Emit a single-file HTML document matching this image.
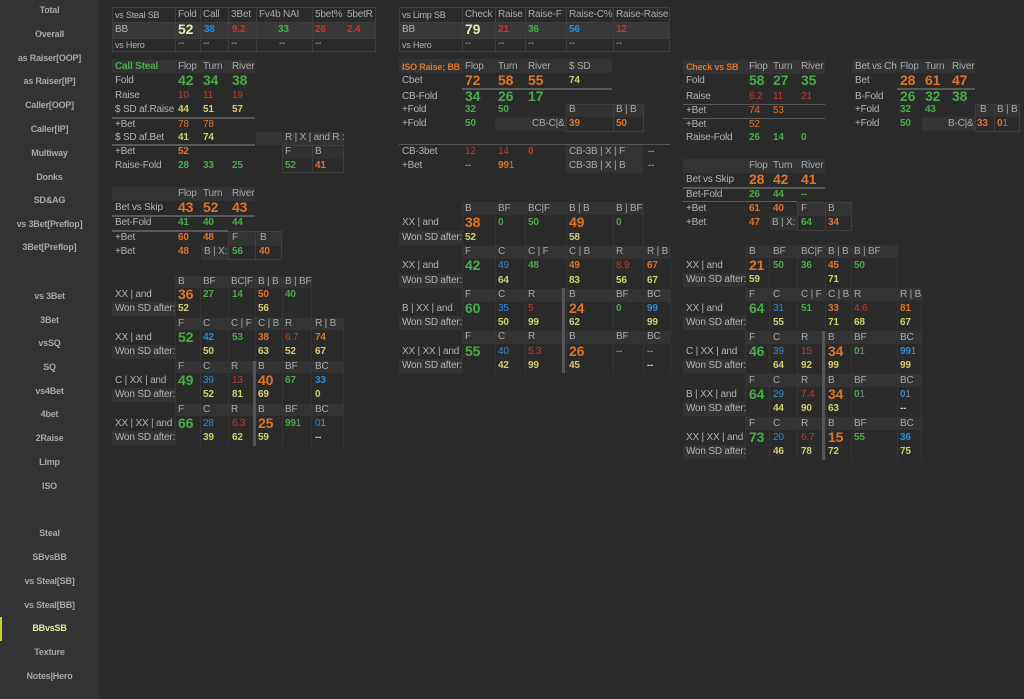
<!DOCTYPE html>
<html><head><meta charset="utf-8"><style>
html,body{margin:0;padding:0}
body{width:1024px;height:699px;background:#2a2a2a;position:relative;overflow:hidden;font-family:"Liberation Sans",sans-serif}
#sb{position:absolute;left:0;top:0;width:99px;height:699px;background:#333}
.s{position:absolute;left:0;width:99px;text-align:center;font-size:9px;letter-spacing:-0.2px;font-weight:bold;color:#a8a8a8;line-height:14px}
i{position:absolute;font-style:normal;white-space:nowrap;line-height:14px;font-size:10px;letter-spacing:-0.2px;color:#aaa}
.L{color:#b4b4b4}
.G,.O,.R,.B,.Y,.P{font-weight:bold}
.G{color:#4aac48}.O{color:#e0742a}.R{color:#cc3434}.B{color:#2a8ddb}.Y{color:#d0d070}.P{color:#e8e8b0}.W{color:#ccc;font-weight:bold}
.k{font-size:14px}
.n{font-weight:normal}
.bx{position:absolute;background:#333}
.bd{position:absolute;border:1px solid #3e3e3e;box-sizing:border-box}
.ln{position:absolute;height:2px;background:#5a5a5a}
.vb{position:absolute;width:3px;background:#555}
.vl{position:absolute;width:1px;background:#353535}
</style></head><body>
<div id="sb"></div>
<div class="s" style="top:3px">Total</div>
<div class="s" style="top:27px">Overall</div>
<div class="s" style="top:51px">as Raiser[OOP]</div>
<div class="s" style="top:74px">as Raiser[IP]</div>
<div class="s" style="top:98px">Caller[OOP]</div>
<div class="s" style="top:122px">Caller[IP]</div>
<div class="s" style="top:146px">Multiway</div>
<div class="s" style="top:170px">Donks</div>
<div class="s" style="top:193px">SD&amp;AG</div>
<div class="s" style="top:217px">vs 3Bet[Preflop]</div>
<div class="s" style="top:240px">3Bet[Preflop]</div>
<div class="s" style="top:289px">vs 3Bet</div>
<div class="s" style="top:313px">3Bet</div>
<div class="s" style="top:336px">vsSQ</div>
<div class="s" style="top:360px">SQ</div>
<div class="s" style="top:384px">vs4Bet</div>
<div class="s" style="top:407px">4bet</div>
<div class="s" style="top:431px">2Raise</div>
<div class="s" style="top:455px">Limp</div>
<div class="s" style="top:479px">ISO</div>
<div class="s" style="top:526px">Steal</div>
<div class="s" style="top:550px">SBvsBB</div>
<div class="s" style="top:574px">vs Steal[SB]</div>
<div class="s" style="top:598px">vs Steal[BB]</div>
<div style="position:absolute;left:0;top:617px;width:2px;height:24px;background:#c8d040"></div>
<div class="s" style="top:621px;color:#e0f0a0">BBvsSB</div>
<div class="s" style="top:645px">Texture</div>
<div class="s" style="top:669px">Notes|Hero</div>

<!-- vs Steal SB table -->
<div class="bx" style="left:112px;top:22px;width:263px;height:16px;background:#383838"></div>
<div class="bd" style="left:112px;top:7px;width:64px;height:45px"></div>
<div class="bd" style="left:175px;top:7px;width:26px;height:45px"></div>
<div class="bd" style="left:200px;top:7px;width:29px;height:45px"></div>
<div class="bd" style="left:228px;top:7px;width:29px;height:45px"></div>
<div class="bd" style="left:256px;top:7px;width:57px;height:45px"></div>
<div class="bd" style="left:312px;top:7px;width:64px;height:45px"></div>
<div class="bd" style="left:112px;top:22px;width:264px;height:17px"></div>
<i class="L" style="left:115px;top:8px;font-size:9px">vs Steal SB</i>
<i style="left:178px;top:8px">Fold</i><i style="left:203px;top:8px">Call</i><i style="left:231px;top:8px">3Bet</i><i style="left:259px;top:8px">Fv4b NAI</i><i style="left:315px;top:8px">5bet%</i><i style="left:347px;top:8px">5betR</i>
<i class="L" style="left:115px;top:23px">BB</i>
<i class="P k" style="left:178px;top:22px">52</i><i class="B" style="left:204px;top:23px">38</i><i class="R" style="left:232px;top:23px">9.2</i><i class="G" style="left:278px;top:23px">33</i><i class="R" style="left:315px;top:23px">26</i><i class="R" style="left:347px;top:23px">2.4</i>
<i class="L" style="left:115px;top:38px;font-size:9px">vs Hero</i>
<i style="left:178px;top:37px">--</i><i style="left:203px;top:37px">--</i><i style="left:231px;top:37px">--</i><i style="left:279px;top:37px">--</i><i style="left:315px;top:37px">--</i>

<!-- Call Steal -->
<div class="bx" style="left:112px;top:60px;width:143px;height:13px"></div>
<i class="G" style="left:115px;top:60px">Call Steal</i>
<i style="left:178px;top:60px">Flop</i><i style="left:203px;top:60px">Turn</i><i style="left:232px;top:60px">River</i>
<i class="L" style="left:115px;top:74px">Fold</i><i class="G k" style="left:178px;top:73px">42</i><i class="G k" style="left:203px;top:73px">34</i><i class="G k" style="left:232px;top:73px">38</i>
<i class="L" style="left:115px;top:89px">Raise</i><i class="R n" style="left:178px;top:89px">10</i><i class="R n" style="left:203px;top:89px">11</i><i class="R n" style="left:232px;top:89px">19</i>
<i class="L" style="left:115px;top:103px">$ SD af.Raise</i><i class="Y" style="left:178px;top:103px">44</i><i class="Y" style="left:203px;top:103px">51</i><i class="Y" style="left:232px;top:103px">57</i>
<div class="ln" style="left:112px;top:117px;width:143px"></div>
<i class="L" style="left:115px;top:118px">+Bet</i><i class="O n" style="left:178px;top:118px">78</i><i class="O n" style="left:203px;top:118px">78</i>
<i class="L" style="left:115px;top:131px">$ SD af.Bet</i><i class="Y" style="left:178px;top:131px">41</i><i class="Y" style="left:203px;top:131px">74</i>
<div class="ln" style="left:112px;top:144px;width:143px"></div>
<div class="bx" style="left:256px;top:132px;width:88px;height:13px"></div>
<i style="left:285px;top:131px">R | X | and R :</i>
<div class="bx" style="left:282px;top:145px;width:61px;height:14px;background:#303030"></div>
<div class="bd" style="left:282px;top:145px;width:31px;height:28px"></div><div class="bd" style="left:312px;top:145px;width:32px;height:28px"></div>
<i style="left:285px;top:145px">F</i><i style="left:315px;top:145px">B</i>
<i class="G" style="left:285px;top:159px">52</i><i class="O" style="left:315px;top:159px">41</i>
<i class="L" style="left:115px;top:145px">+Bet</i><i class="O" style="left:178px;top:145px">52</i>
<i class="L" style="left:115px;top:159px">Raise-Fold</i><i class="G" style="left:178px;top:159px">28</i><i class="G" style="left:203px;top:159px">33</i><i class="G" style="left:232px;top:159px">25</i>

<!-- Bet vs Skip left -->
<div class="bx" style="left:112px;top:187px;width:143px;height:14px"></div>
<i style="left:178px;top:187px">Flop</i><i style="left:203px;top:187px">Turn</i><i style="left:232px;top:187px">River</i>
<i class="L" style="left:115px;top:201px">Bet vs Skip</i><i class="O k" style="left:178px;top:200px">43</i><i class="O k" style="left:203px;top:200px">52</i><i class="O k" style="left:232px;top:200px">43</i>
<div class="ln" style="left:112px;top:215px;width:143px"></div>
<i class="L" style="left:115px;top:216px">Bet-Fold</i><i class="G" style="left:178px;top:216px">41</i><i class="G" style="left:203px;top:216px">40</i><i class="G" style="left:232px;top:216px">44</i>
<div class="ln" style="left:112px;top:230px;width:116px"></div>
<div class="bx" style="left:228px;top:231px;width:54px;height:15px"></div>
<i class="L" style="left:115px;top:231px">+Bet</i><i class="O" style="left:178px;top:231px">60</i><i class="O" style="left:203px;top:231px">48</i><i style="left:232px;top:231px">F</i><i style="left:260px;top:231px">B</i>
<div class="bx" style="left:201px;top:246px;width:27px;height:14px"></div>
<div class="bd" style="left:228px;top:231px;width:28px;height:29px"></div><div class="bd" style="left:255px;top:231px;width:27px;height:29px"></div>
<i class="L" style="left:115px;top:245px">+Bet</i><i class="O" style="left:178px;top:245px">48</i><i style="left:204px;top:245px">B | X:</i><i class="G" style="left:232px;top:245px">56</i><i class="O" style="left:259px;top:245px">40</i>

<!-- Left cross tables -->
<div class="bx" style="left:175px;top:276px;width:137px;height:12px"></div>
<div class="bx" style="left:175px;top:318px;width:169px;height:12px"></div>
<div class="bx" style="left:175px;top:361px;width:169px;height:12px"></div>
<div class="bx" style="left:175px;top:404px;width:169px;height:12px"></div>
<div class="bx" style="left:112px;top:302px;width:63px;height:14px"></div>
<div class="bx" style="left:112px;top:345px;width:63px;height:14px"></div>
<div class="bx" style="left:112px;top:388px;width:63px;height:14px"></div>
<div class="bx" style="left:112px;top:431px;width:63px;height:14px"></div>
<div class="vl" style="left:175px;top:276px;height:170px"></div><div class="vl" style="left:200px;top:276px;height:170px"></div><div class="vl" style="left:228px;top:276px;height:170px"></div><div class="vl" style="left:255px;top:276px;height:170px"></div><div class="vl" style="left:282px;top:276px;height:170px"></div><div class="vl" style="left:311px;top:276px;height:170px"></div><div class="vl" style="left:343px;top:318px;height:128px"></div>
<div class="vb" style="left:253px;top:361px;height:85px"></div>
<i style="left:178px;top:275px">B</i><i style="left:203px;top:275px">BF</i><i style="left:231px;top:275px">BC|F</i><i style="left:258px;top:275px">B | B</i><i style="left:285px;top:275px">B | BF</i>
<i class="L" style="left:115px;top:288px">XX | and</i><i class="O k" style="left:178px;top:287px">36</i><i class="G" style="left:203px;top:288px">27</i><i class="G" style="left:232px;top:288px">14</i><i class="O" style="left:258px;top:288px">50</i><i class="G" style="left:285px;top:288px">40</i>
<i class="L" style="left:115px;top:302px">Won SD after:</i><i class="Y" style="left:178px;top:302px">52</i><i class="Y" style="left:258px;top:302px">56</i>
<i style="left:178px;top:317px">F</i><i style="left:203px;top:317px">C</i><i style="left:231px;top:317px">C | F</i><i style="left:258px;top:317px">C | B</i><i style="left:285px;top:317px">R</i><i style="left:315px;top:317px">R | B</i>
<i class="L" style="left:115px;top:331px">XX | and</i><i class="G k" style="left:178px;top:330px">52</i><i class="B" style="left:203px;top:331px">42</i><i class="G" style="left:232px;top:331px">53</i><i class="O" style="left:258px;top:331px">38</i><i class="R n" style="left:285px;top:331px">6.7</i><i class="O" style="left:315px;top:331px">74</i>
<i class="L" style="left:115px;top:345px">Won SD after:</i><i class="Y" style="left:203px;top:345px">50</i><i class="Y" style="left:258px;top:345px">63</i><i class="Y" style="left:285px;top:345px">52</i><i class="Y" style="left:315px;top:345px">67</i>
<i style="left:178px;top:360px">F</i><i style="left:203px;top:360px">C</i><i style="left:231px;top:360px">R</i><i style="left:258px;top:360px">B</i><i style="left:285px;top:360px">BF</i><i style="left:315px;top:360px">BC</i>
<i class="L" style="left:115px;top:374px">C | XX | and</i><i class="G k" style="left:178px;top:373px">49</i><i class="B n" style="left:203px;top:374px">39</i><i class="R n" style="left:232px;top:374px">13</i><i class="O k" style="left:258px;top:373px">40</i><i class="G" style="left:285px;top:374px">67</i><i class="B" style="left:315px;top:374px">33</i>
<i class="L" style="left:115px;top:388px">Won SD after:</i><i class="Y" style="left:203px;top:388px">52</i><i class="Y" style="left:232px;top:388px">81</i><i class="Y" style="left:258px;top:388px">69</i><i class="Y" style="left:315px;top:388px">0</i>
<i style="left:178px;top:403px">F</i><i style="left:203px;top:403px">C</i><i style="left:231px;top:403px">R</i><i style="left:258px;top:403px">B</i><i style="left:285px;top:403px">BF</i><i style="left:315px;top:403px">BC</i>
<i class="L" style="left:115px;top:417px">XX | XX | and</i><i class="G k" style="left:178px;top:416px">66</i><i class="B n" style="left:203px;top:417px">28</i><i class="R n" style="left:232px;top:417px">6.3</i><i class="O k" style="left:258px;top:416px">25</i><i class="G" style="left:285px;top:417px">99<span style="color:#888;font-weight:normal">1</span></i><i class="B n" style="left:315px;top:417px">0<span style="color:#888">1</span></i>
<i class="L" style="left:115px;top:431px">Won SD after:</i><i class="Y" style="left:203px;top:431px">39</i><i class="Y" style="left:232px;top:431px">62</i><i class="Y" style="left:258px;top:431px">59</i><i class="Y" style="left:315px;top:431px">--</i>

<!-- vs Limp SB -->
<div class="bx" style="left:399px;top:22px;width:271px;height:16px;background:#383838"></div>
<div class="bd" style="left:399px;top:7px;width:64px;height:45px"></div>
<div class="bd" style="left:462px;top:7px;width:34px;height:45px"></div>
<div class="bd" style="left:495px;top:7px;width:31px;height:45px"></div>
<div class="bd" style="left:525px;top:7px;width:42px;height:45px"></div>
<div class="bd" style="left:566px;top:7px;width:48px;height:45px"></div>
<div class="bd" style="left:613px;top:7px;width:57px;height:45px"></div>
<div class="bd" style="left:399px;top:22px;width:271px;height:17px"></div>
<i class="L" style="left:402px;top:8px;font-size:9px">vs Limp SB</i>
<i style="left:465px;top:8px">Check</i><i style="left:498px;top:8px">Raise</i><i style="left:528px;top:8px">Raise-F</i><i style="left:569px;top:8px">Raise-C%</i><i style="left:616px;top:8px">Raise-Raise</i>
<i class="L" style="left:402px;top:23px">BB</i>
<i class="P k" style="left:465px;top:22px">79</i><i class="R" style="left:498px;top:23px">21</i><i class="G" style="left:528px;top:23px">36</i><i class="B" style="left:569px;top:23px">56</i><i class="R" style="left:616px;top:23px">12</i>
<i class="L" style="left:402px;top:38px;font-size:9px">vs Hero</i>
<i style="left:465px;top:37px">--</i><i style="left:498px;top:37px">--</i><i style="left:528px;top:37px">--</i><i style="left:569px;top:37px">--</i><i style="left:616px;top:37px">--</i>

<!-- ISO Raise -->
<div class="bx" style="left:399px;top:59px;width:213px;height:14px"></div>
<i class="O" style="left:402px;top:60px;font-size:9px">ISO Raise; BB</i>
<i style="left:465px;top:60px">Flop</i><i style="left:498px;top:60px">Turn</i><i style="left:528px;top:60px">River</i><i style="left:569px;top:60px">$ SD</i>
<i class="L" style="left:402px;top:74px">Cbet</i><i class="O k" style="left:465px;top:73px">72</i><i class="O k" style="left:498px;top:73px">58</i><i class="O k" style="left:528px;top:73px">55</i><i class="Y" style="left:569px;top:74px">74</i>
<div class="ln" style="left:462px;top:88px;width:150px"></div>
<i class="L" style="left:402px;top:90px">CB-Fold</i><i class="G k" style="left:465px;top:89px">34</i><i class="G k" style="left:498px;top:89px">26</i><i class="G k" style="left:528px;top:89px">17</i>
<div class="bx" style="left:566px;top:104px;width:77px;height:13px"></div>
<div class="bx" style="left:495px;top:117px;width:71px;height:14px"></div>
<div class="bd" style="left:566px;top:104px;width:48px;height:28px"></div><div class="bd" style="left:613px;top:104px;width:31px;height:28px"></div>
<i class="L" style="left:402px;top:103px">+Fold</i><i class="G" style="left:465px;top:103px">32</i><i class="G" style="left:498px;top:103px">50</i><i style="left:569px;top:103px">B</i><i style="left:616px;top:103px">B | B</i>
<i class="L" style="left:402px;top:117px">+Fold</i><i class="G" style="left:465px;top:117px">50</i><i style="left:532px;top:117px">CB-C|&amp;</i><i class="O" style="left:569px;top:117px">39</i><i class="O" style="left:616px;top:117px">50</i>
<div style="position:absolute;left:399px;top:144px;width:271px;height:1px;background:#555"></div>
<div class="bx" style="left:566px;top:145px;width:77px;height:28px"></div>
<i class="L" style="left:402px;top:145px">CB-3bet</i><i class="R n" style="left:465px;top:145px">12</i><i class="R n" style="left:498px;top:145px">14</i><i class="R" style="left:528px;top:145px">0</i><i style="left:569px;top:145px">CB-3B | X | F</i><i class="G" style="left:648px;top:145px">--</i>
<i class="L" style="left:402px;top:159px">+Bet</i><i class="O" style="left:465px;top:159px">--</i><i class="O" style="left:498px;top:159px">99<span style="color:#888;font-weight:normal">1</span></i><i style="left:569px;top:159px">CB-3B | X | B</i><i class="O" style="left:648px;top:159px">--</i>

<!-- middle cross tables -->
<div class="bx" style="left:462px;top:202px;width:181px;height:13px"></div>
<div class="bx" style="left:462px;top:246px;width:208px;height:13px"></div>
<div class="bx" style="left:462px;top:289px;width:208px;height:13px"></div>
<div class="bx" style="left:462px;top:331px;width:208px;height:13px"></div>
<div class="bx" style="left:399px;top:231px;width:63px;height:14px"></div>
<div class="bx" style="left:399px;top:274px;width:63px;height:14px"></div>
<div class="bx" style="left:399px;top:316px;width:63px;height:14px"></div>
<div class="bx" style="left:399px;top:359px;width:63px;height:14px"></div>
<div class="vl" style="left:462px;top:202px;height:171px"></div><div class="vl" style="left:495px;top:202px;height:171px"></div><div class="vl" style="left:525px;top:202px;height:171px"></div><div class="vl" style="left:566px;top:202px;height:171px"></div><div class="vl" style="left:613px;top:202px;height:171px"></div><div class="vl" style="left:643px;top:202px;height:171px"></div><div class="vl" style="left:670px;top:246px;height:127px"></div>
<div class="vb" style="left:562px;top:288px;height:85px"></div>
<i style="left:465px;top:202px">B</i><i style="left:498px;top:202px">BF</i><i style="left:528px;top:202px">BC|F</i><i style="left:569px;top:202px">B | B</i><i style="left:616px;top:202px">B | BF</i>
<i class="L" style="left:402px;top:216px">XX | and</i><i class="O k" style="left:465px;top:215px">38</i><i class="G" style="left:498px;top:216px">0</i><i class="G" style="left:528px;top:216px">50</i><i class="O k" style="left:569px;top:215px">49</i><i class="G" style="left:616px;top:216px">0</i>
<i class="L" style="left:402px;top:231px">Won SD after:</i><i class="Y" style="left:465px;top:231px">52</i><i class="Y" style="left:569px;top:231px">58</i>
<i style="left:465px;top:245px">F</i><i style="left:498px;top:245px">C</i><i style="left:528px;top:245px">C | F</i><i style="left:569px;top:245px">C | B</i><i style="left:616px;top:245px">R</i><i style="left:647px;top:245px">R | B</i>
<i class="L" style="left:402px;top:259px">XX | and</i><i class="G k" style="left:465px;top:258px">42</i><i class="B n" style="left:498px;top:259px">49</i><i class="G" style="left:528px;top:259px">48</i><i class="O" style="left:569px;top:259px">49</i><i class="R n" style="left:616px;top:259px">8.9</i><i class="O" style="left:647px;top:259px">67</i>
<i class="L" style="left:402px;top:274px">Won SD after:</i><i class="Y" style="left:498px;top:274px">64</i><i class="Y" style="left:569px;top:274px">83</i><i class="Y" style="left:616px;top:274px">56</i><i class="Y" style="left:647px;top:274px">67</i>
<i style="left:465px;top:288px">F</i><i style="left:498px;top:288px">C</i><i style="left:528px;top:288px">R</i><i style="left:569px;top:288px">B</i><i style="left:616px;top:288px">BF</i><i style="left:647px;top:288px">BC</i>
<i class="L" style="left:402px;top:302px">B | XX | and</i><i class="G k" style="left:465px;top:301px">60</i><i class="B n" style="left:498px;top:302px">35</i><i class="R n" style="left:528px;top:302px">5</i><i class="O k" style="left:569px;top:301px">24</i><i class="G" style="left:616px;top:302px">0</i><i class="B" style="left:647px;top:302px">99</i>
<i class="L" style="left:402px;top:316px">Won SD after:</i><i class="Y" style="left:498px;top:316px">50</i><i class="Y" style="left:528px;top:316px">99</i><i class="Y" style="left:569px;top:316px">62</i><i class="Y" style="left:647px;top:316px">99</i>
<i style="left:465px;top:330px">F</i><i style="left:498px;top:330px">C</i><i style="left:528px;top:330px">R</i><i style="left:569px;top:330px">B</i><i style="left:616px;top:330px">BF</i><i style="left:647px;top:330px">BC</i>
<i class="L" style="left:402px;top:345px">XX | XX | and</i><i class="G k" style="left:465px;top:344px">55</i><i class="B n" style="left:498px;top:345px">40</i><i class="R n" style="left:528px;top:345px">5.3</i><i class="O k" style="left:569px;top:344px">26</i><i class="G" style="left:616px;top:345px">--</i><i class="B" style="left:647px;top:345px">--</i>
<i class="L" style="left:402px;top:359px">Won SD after:</i><i class="Y" style="left:498px;top:359px">42</i><i class="Y" style="left:528px;top:359px">99</i><i class="Y" style="left:569px;top:359px">45</i><i class="W" style="left:647px;top:359px">--</i>

<!-- Check vs SB -->
<div class="bx" style="left:683px;top:60px;width:142px;height:14px"></div>
<i class="O" style="left:686px;top:60px;font-size:9px">Check vs SB</i>
<i style="left:749px;top:60px">Flop</i><i style="left:773px;top:60px">Turn</i><i style="left:801px;top:60px">River</i>
<i class="L" style="left:686px;top:74px">Fold</i><i class="G k" style="left:749px;top:73px">58</i><i class="G k" style="left:773px;top:73px">27</i><i class="G k" style="left:801px;top:73px">35</i>
<i class="L" style="left:686px;top:90px">Raise</i><i class="R n" style="left:749px;top:90px">6.2</i><i class="R n" style="left:773px;top:90px">11</i><i class="R n" style="left:801px;top:90px">21</i>
<div style="position:absolute;left:683px;top:104px;width:142px;height:1px;background:#5a5a5a"></div>
<i class="L" style="left:686px;top:104px">+Bet</i><i class="O n" style="left:749px;top:104px">74</i><i class="O n" style="left:773px;top:104px">53</i>
<div style="position:absolute;left:683px;top:118px;width:142px;height:1px;background:#5a5a5a"></div>
<i class="L" style="left:686px;top:118px">+Bet</i><i class="O n" style="left:749px;top:118px">52</i>
<i class="L" style="left:686px;top:131px">Raise-Fold</i><i class="G" style="left:749px;top:131px">26</i><i class="G" style="left:773px;top:131px">14</i><i class="G" style="left:801px;top:131px">0</i>

<!-- Bet vs Ch -->
<div class="bx" style="left:852px;top:59px;width:123px;height:14px"></div>
<i class="L" style="left:855px;top:60px">Bet vs Ch</i><i style="left:900px;top:60px">Flop</i><i style="left:925px;top:60px">Turn</i><i style="left:952px;top:60px">River</i>
<i class="L" style="left:855px;top:74px">Bet</i><i class="O k" style="left:900px;top:73px">28</i><i class="O k" style="left:925px;top:73px">61</i><i class="O k" style="left:952px;top:73px">47</i>
<div class="ln" style="left:897px;top:88px;width:78px"></div>
<i class="L" style="left:855px;top:90px">B-Fold</i><i class="G k" style="left:900px;top:89px">26</i><i class="G k" style="left:925px;top:89px">32</i><i class="G k" style="left:952px;top:89px">38</i>
<div class="bx" style="left:975px;top:104px;width:45px;height:13px"></div>
<div class="bx" style="left:922px;top:117px;width:53px;height:14px"></div>
<div class="bd" style="left:975px;top:104px;width:20px;height:28px"></div><div class="bd" style="left:994px;top:104px;width:26px;height:28px"></div>
<i class="L" style="left:855px;top:103px">+Fold</i><i class="G" style="left:900px;top:103px">32</i><i class="G" style="left:925px;top:103px">43</i><i style="left:980px;top:103px">B</i><i style="left:997px;top:103px">B | B</i>
<i class="L" style="left:855px;top:117px">+Fold</i><i class="G" style="left:900px;top:117px">50</i><i style="left:948px;top:117px">B-C|&amp;</i><i class="O" style="left:977px;top:117px">33</i><i class="O" style="left:997px;top:117px">0<span style="color:#888;font-weight:normal">1</span></i>

<!-- Bet vs Skip right -->
<div class="bx" style="left:683px;top:159px;width:142px;height:14px"></div>
<i style="left:749px;top:159px">Flop</i><i style="left:773px;top:159px">Turn</i><i style="left:801px;top:159px">River</i>
<i class="L" style="left:686px;top:173px">Bet vs Skip</i><i class="O k" style="left:749px;top:172px">28</i><i class="O k" style="left:773px;top:172px">42</i><i class="O k" style="left:801px;top:172px">41</i>
<div class="ln" style="left:683px;top:187px;width:142px"></div>
<i class="L" style="left:686px;top:188px">Bet-Fold</i><i class="G" style="left:749px;top:188px">26</i><i class="G" style="left:773px;top:188px">44</i><i class="G" style="left:801px;top:188px">--</i>
<div style="position:absolute;left:683px;top:201px;width:114px;height:1px;background:#5a5a5a"></div>
<div class="bx" style="left:797px;top:202px;width:54px;height:14px"></div>
<div class="bx" style="left:770px;top:216px;width:27px;height:14px"></div>
<div class="bd" style="left:797px;top:202px;width:29px;height:29px"></div><div class="bd" style="left:825px;top:202px;width:27px;height:29px"></div>
<i class="L" style="left:686px;top:202px">+Bet</i><i class="O" style="left:749px;top:202px">61</i><i class="O" style="left:773px;top:202px">40</i><i style="left:801px;top:202px">F</i><i style="left:828px;top:202px">B</i>
<i class="L" style="left:686px;top:216px">+Bet</i><i class="O" style="left:749px;top:216px">47</i><i style="left:772px;top:216px">B | X:</i><i class="G" style="left:801px;top:216px">64</i><i class="O" style="left:828px;top:216px">34</i>

<!-- Right cross tables -->
<div class="bx" style="left:745px;top:245px;width:152px;height:13px"></div>
<div class="bx" style="left:745px;top:288px;width:176px;height:13px"></div>
<div class="bx" style="left:745px;top:331px;width:176px;height:13px"></div>
<div class="bx" style="left:745px;top:374px;width:176px;height:13px"></div>
<div class="bx" style="left:745px;top:417px;width:176px;height:13px"></div>
<div class="bx" style="left:683px;top:273px;width:62px;height:14px"></div>
<div class="bx" style="left:683px;top:316px;width:62px;height:14px"></div>
<div class="bx" style="left:683px;top:359px;width:62px;height:14px"></div>
<div class="bx" style="left:683px;top:402px;width:62px;height:14px"></div>
<div class="bx" style="left:683px;top:445px;width:62px;height:14px"></div>
<div class="vl" style="left:745px;top:245px;height:215px"></div><div class="vl" style="left:769px;top:245px;height:215px"></div><div class="vl" style="left:797px;top:245px;height:215px"></div><div class="vl" style="left:825px;top:245px;height:215px"></div><div class="vl" style="left:851px;top:245px;height:215px"></div><div class="vl" style="left:897px;top:245px;height:215px"></div><div class="vl" style="left:921px;top:288px;height:172px"></div>
<div class="vb" style="left:822px;top:331px;height:129px"></div>
<i style="left:749px;top:245px">B</i><i style="left:773px;top:245px">BF</i><i style="left:801px;top:245px">BC|F</i><i style="left:828px;top:245px">B | B</i><i style="left:854px;top:245px">B | BF</i>
<i class="L" style="left:686px;top:259px">XX | and</i><i class="O k" style="left:749px;top:258px">21</i><i class="G" style="left:773px;top:259px">50</i><i class="G" style="left:801px;top:259px">36</i><i class="O" style="left:828px;top:259px">45</i><i class="G" style="left:854px;top:259px">50</i>
<i class="L" style="left:686px;top:273px">Won SD after:</i><i class="Y" style="left:749px;top:273px">59</i><i class="Y" style="left:828px;top:273px">71</i>
<i style="left:749px;top:288px">F</i><i style="left:773px;top:288px">C</i><i style="left:801px;top:288px">C | F</i><i style="left:828px;top:288px">C | B</i><i style="left:854px;top:288px">R</i><i style="left:900px;top:288px">R | B</i>
<i class="L" style="left:686px;top:302px">XX | and</i><i class="G k" style="left:749px;top:301px">64</i><i class="B n" style="left:773px;top:302px">31</i><i class="G" style="left:801px;top:302px">51</i><i class="O" style="left:828px;top:302px">33</i><i class="R n" style="left:854px;top:302px">4.6</i><i class="O" style="left:900px;top:302px">81</i>
<i class="L" style="left:686px;top:316px">Won SD after:</i><i class="Y" style="left:773px;top:316px">55</i><i class="Y" style="left:828px;top:316px">71</i><i class="Y" style="left:854px;top:316px">68</i><i class="Y" style="left:900px;top:316px">67</i>
<i style="left:749px;top:331px">F</i><i style="left:773px;top:331px">C</i><i style="left:801px;top:331px">R</i><i style="left:828px;top:331px">B</i><i style="left:854px;top:331px">BF</i><i style="left:900px;top:331px">BC</i>
<i class="L" style="left:686px;top:345px">C | XX | and</i><i class="G k" style="left:749px;top:344px">46</i><i class="B n" style="left:773px;top:345px">39</i><i class="R n" style="left:801px;top:345px">15</i><i class="O k" style="left:828px;top:344px">34</i><i class="G" style="left:854px;top:345px">0<span style="color:#888;font-weight:normal">1</span></i><i class="B" style="left:900px;top:345px">99<span style="color:#888;font-weight:normal">1</span></i>
<i class="L" style="left:686px;top:359px">Won SD after:</i><i class="Y" style="left:773px;top:359px">64</i><i class="Y" style="left:801px;top:359px">92</i><i class="Y" style="left:828px;top:359px">99</i><i class="Y" style="left:900px;top:359px">99</i>
<i style="left:749px;top:374px">F</i><i style="left:773px;top:374px">C</i><i style="left:801px;top:374px">R</i><i style="left:828px;top:374px">B</i><i style="left:854px;top:374px">BF</i><i style="left:900px;top:374px">BC</i>
<i class="L" style="left:686px;top:388px">B | XX | and</i><i class="G k" style="left:749px;top:387px">64</i><i class="B n" style="left:773px;top:388px">29</i><i class="R n" style="left:801px;top:388px">7.4</i><i class="O k" style="left:828px;top:387px">34</i><i class="G" style="left:854px;top:388px">0<span style="color:#888;font-weight:normal">1</span></i><i class="B" style="left:900px;top:388px">0<span style="color:#888;font-weight:normal">1</span></i>
<i class="L" style="left:686px;top:402px">Won SD after:</i><i class="Y" style="left:773px;top:402px">44</i><i class="Y" style="left:801px;top:402px">90</i><i class="Y" style="left:828px;top:402px">63</i><i class="W" style="left:900px;top:402px">--</i>
<i style="left:749px;top:417px">F</i><i style="left:773px;top:417px">C</i><i style="left:801px;top:417px">R</i><i style="left:828px;top:417px">B</i><i style="left:854px;top:417px">BF</i><i style="left:900px;top:417px">BC</i>
<i class="L" style="left:686px;top:431px">XX | XX | and</i><i class="G k" style="left:749px;top:430px">73</i><i class="B n" style="left:773px;top:431px">20</i><i class="R n" style="left:801px;top:431px">6.7</i><i class="O k" style="left:828px;top:430px">15</i><i class="G" style="left:854px;top:431px">55</i><i class="B" style="left:900px;top:431px">36</i>
<i class="L" style="left:686px;top:445px">Won SD after:</i><i class="Y" style="left:773px;top:445px">46</i><i class="Y" style="left:801px;top:445px">78</i><i class="Y" style="left:828px;top:445px">72</i><i class="Y" style="left:900px;top:445px">75</i>
</body></html>
